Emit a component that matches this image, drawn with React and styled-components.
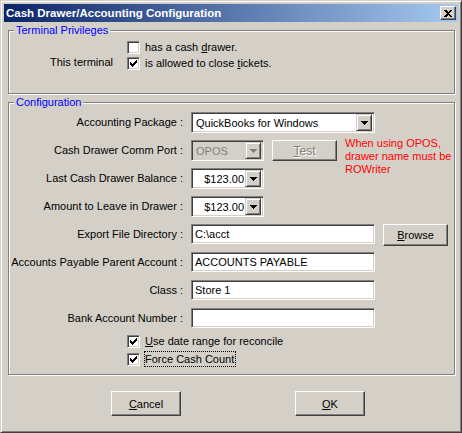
import React from 'react'
import styled, { createGlobalStyle } from 'styled-components'

const FACE = '#D4D0C8'

const GlobalStyle = createGlobalStyle`
  html, body {
    margin: 0;
    padding: 0;
    background: ${FACE};
  }
  body {
    font-family: "Liberation Sans", Arial, sans-serif;
    font-size: 11px;
    color: #000;
  }
`

const Window = styled.div`
  box-sizing: border-box;
  width: 462px;
  height: 433px;
  background: ${FACE};
  border: 1px solid;
  border-color: ${FACE} #404040 #404040 ${FACE};
  box-shadow: inset 1px 1px #fff, inset -1px -1px #808080;
  padding: 3px;
  display: flex;
  flex-direction: column;
`
const TitleBar = styled.div`
  height: 18px;
  flex: none;
  display: flex;
  align-items: center;
  justify-content: space-between;
  padding: 0 2px;
  background: linear-gradient(to right, #0a246a, #a6caf0);
`
const Title = styled.span`
  color: #fff;
  font-weight: bold;
  font-size: 11.5px;
  white-space: nowrap;
`
const CloseButton = styled.div`
  box-sizing: border-box;
  width: 16px;
  height: 14px;
  background: ${FACE};
  border: 1px solid;
  border-color: #fff #404040 #404040 #fff;
  box-shadow: inset -1px -1px #808080;
  display: flex;
  align-items: center;
  justify-content: center;
  padding-right: 1px;
`
const Client = styled.div`
  display: flex;
  flex-direction: column;
  padding: 0 3px 0 4px;
`
const Group = styled.fieldset`
  margin: ${p => p.$top}px 0 0 0;
  padding: 0;
  min-width: 0;
  border: 1px solid #808080;
  box-shadow: inset 1px 1px #fff, 1px 1px #fff;
`
const Legend = styled.legend`
  color: #0000ff;
  line-height: 13px;
  padding: 0 2px;
  margin-left: 5px;
  background: ${FACE};
`
const PrivBody = styled.div`
  display: grid;
  grid-template-columns: 104px auto;
  grid-auto-rows: 16px;
  column-gap: 14px;
  padding: 2px 0 22px 0;
`
const TermLabel = styled.div`
  grid-column: 1;
  grid-row: 2;
  text-align: right;
  line-height: 16px;
  margin-top: -1px;
`
const CheckRow = styled.div`
  grid-column: 2;
  display: flex;
  align-items: center;
  gap: 4px;
  height: 16px;
`
const CheckBox = styled.div`
  box-sizing: border-box;
  width: 13px;
  height: 13px;
  flex: none;
  background: #fff;
  border: 1px solid;
  border-color: #808080 #fff #fff #808080;
  box-shadow: inset 1px 1px #404040, inset -1px -1px ${FACE};
  display: flex;
  align-items: center;
  justify-content: center;
`
const CheckText = styled.span`
  box-sizing: border-box;
  height: 16px;
  line-height: 14px;
  padding: 0 1px 0 0;
  border: 1px ${p => (p.$focused ? 'dotted #000' : 'solid transparent')};
  white-space: nowrap;
`
const ConfigGrid = styled.div`
  display: grid;
  grid-template-columns: 174px auto;
  grid-auto-rows: 21px;
  column-gap: 8px;
  row-gap: 7px;
  padding-top: 3px;
`
const FieldLabel = styled.div`
  text-align: right;
  line-height: 21px;
  white-space: nowrap;
`
const FieldCell = styled.div`
  display: flex;
  align-items: flex-start;
  gap: 8px;
`
const Combo = styled.div`
  box-sizing: border-box;
  width: ${p => p.$width}px;
  height: 21px;
  flex: none;
  display: flex;
  align-items: center;
  background: ${p => (p.$disabled ? FACE : '#fff')};
  color: ${p => (p.$disabled ? '#808080' : '#000')};
  border: 1px solid;
  border-color: #808080 #fff #fff #808080;
  box-shadow: inset 1px 1px #404040, inset -1px -1px ${FACE};
  padding: 2px;
`
const ComboValue = styled.span`
  flex: 1;
  padding: 0 ${p => (p.$right ? '1px' : '2px')} 0 2px;
  text-align: ${p => (p.$right ? 'right' : 'left')};
  white-space: nowrap;
  overflow: hidden;
`
const ComboArrow = styled.div`
  box-sizing: border-box;
  width: 16px;
  height: 17px;
  flex: none;
  background: ${FACE};
  border: 1px solid;
  border-color: ${FACE} #404040 #404040 ${FACE};
  box-shadow: inset 1px 1px #fff, inset -1px -1px #808080;
  display: flex;
  align-items: center;
  justify-content: center;
`
const TextBox = styled.div`
  box-sizing: border-box;
  width: 184px;
  height: 20px;
  flex: none;
  background: #fff;
  border: 1px solid;
  border-color: #808080 #fff #fff #808080;
  box-shadow: inset 1px 1px #404040, inset -1px -1px ${FACE};
  padding: 0 2px 0 3px;
  line-height: 18px;
  white-space: nowrap;
`
const PushButton = styled.div`
  box-sizing: border-box;
  width: ${p => p.$width}px;
  height: ${p => p.$height}px;
  flex: none;
  background: ${FACE};
  border: 1px solid;
  border-color: #fff #404040 #404040 #fff;
  box-shadow: inset -1px -1px #808080;
  display: flex;
  align-items: center;
  justify-content: center;
  color: ${p => (p.$disabled ? '#808080' : '#000')};
  text-shadow: ${p => (p.$disabled ? '1px 1px #fff' : 'none')};
  font-size: ${p => (p.$big ? 12 : 11)}px;
`
const Note = styled.div`
  color: #ff0000;
  line-height: 13px;
  margin-top: -3px;
  white-space: nowrap;
  font-size: 11px;
`
const CheckList = styled.div`
  display: flex;
  flex-direction: column;
  gap: 2px;
  padding: 4px 0 7px 118px;
`
const Footer = styled.div`
  display: flex;
  gap: 114px;
  padding: 16px 0 0 103px;
`

const Arrow = ({ disabled }) => (
  <svg width="7" height="4" viewBox="0 0 7 4" shapeRendering="crispEdges">
    <polygon points="0,0 7,0 3.5,4" fill={disabled ? '#808080' : '#000'} />
  </svg>
)

const Check = () => (
  <svg width="7" height="7" viewBox="0 0 7 7" shapeRendering="crispEdges">
    <path d="M0 2 L2 4 L7 -1 L7 2 L2 7 L0 5 Z" fill="#000" />
  </svg>
)

const ComboBox = ({ width, value, disabled, right }) => (
  <Combo $width={width} $disabled={disabled}>
    <ComboValue $right={right}>{value}</ComboValue>
    <ComboArrow>
      <Arrow disabled={disabled} />
    </ComboArrow>
  </Combo>
)

const CheckOption = ({ checked, focused, children }) => (
  <CheckRow>
    <CheckBox>{checked && <Check />}</CheckBox>
    <CheckText $focused={focused}>{children}</CheckText>
  </CheckRow>
)

const App = () => (
  <>
    <GlobalStyle />
    <Window>
      <TitleBar>
        <Title>Cash Drawer/Accounting Configuration</Title>
        <CloseButton>
          <svg width="8" height="7" viewBox="0 0 8 7" shapeRendering="crispEdges">
            <path d="M0 0 H2 L4 2 L6 0 H8 L5 3.5 L8 7 H6 L4 5 L2 7 H0 L3 3.5 Z" fill="#000" />
          </svg>
        </CloseButton>
      </TitleBar>
      <Client>
        <Group $top={2}>
          <Legend>Terminal Privileges</Legend>
          <PrivBody>
            <CheckOption>has a cash <u>d</u>rawer.</CheckOption>
            <TermLabel>This terminal</TermLabel>
            <CheckOption checked>is allowed to close <u>t</u>ickets.</CheckOption>
          </PrivBody>
        </Group>

        <Group $top={2}>
          <Legend>Configuration</Legend>
          <ConfigGrid>
            <FieldLabel>Accounting Package :</FieldLabel>
            <FieldCell>
              <ComboBox width={184} value="QuickBooks for Windows" />
            </FieldCell>

            <FieldLabel>Cash Drawer Comm Port :</FieldLabel>
            <FieldCell>
              <ComboBox width={73} value="OPOS" disabled />
              <PushButton $width={65} $height={21} $disabled $big>
                <span><u>T</u>est</span>
              </PushButton>
              <Note>
                When using OPOS,<br />
                drawer name must be<br />
                ROWriter
              </Note>
            </FieldCell>

            <FieldLabel>Last Cash Drawer Balance :</FieldLabel>
            <FieldCell>
              <ComboBox width={73} value="$123.00" right />
            </FieldCell>

            <FieldLabel>Amount to Leave in Drawer :</FieldLabel>
            <FieldCell>
              <ComboBox width={73} value="$123.00" right />
            </FieldCell>

            <FieldLabel>Export File Directory :</FieldLabel>
            <FieldCell>
              <TextBox>C:\acct</TextBox>
              <PushButton $width={65} $height={22}>
                <span><u>B</u>rowse</span>
              </PushButton>
            </FieldCell>

            <FieldLabel>Accounts Payable Parent Account :</FieldLabel>
            <FieldCell>
              <TextBox>ACCOUNTS PAYABLE</TextBox>
            </FieldCell>

            <FieldLabel>Class :</FieldLabel>
            <FieldCell>
              <TextBox>Store 1</TextBox>
            </FieldCell>

            <FieldLabel>Bank Account Number :</FieldLabel>
            <FieldCell>
              <TextBox />
            </FieldCell>
          </ConfigGrid>
          <CheckList>
            <CheckOption checked><u>U</u>se date range for reconcile</CheckOption>
            <CheckOption checked focused>Force Cash Count</CheckOption>
          </CheckList>
        </Group>

        <Footer>
          <PushButton $width={70} $height={25}>
            <span><u>C</u>ancel</span>
          </PushButton>
          <PushButton $width={70} $height={25}>
            <span><u>O</u>K</span>
          </PushButton>
        </Footer>
      </Client>
    </Window>
  </>
)

export default App
